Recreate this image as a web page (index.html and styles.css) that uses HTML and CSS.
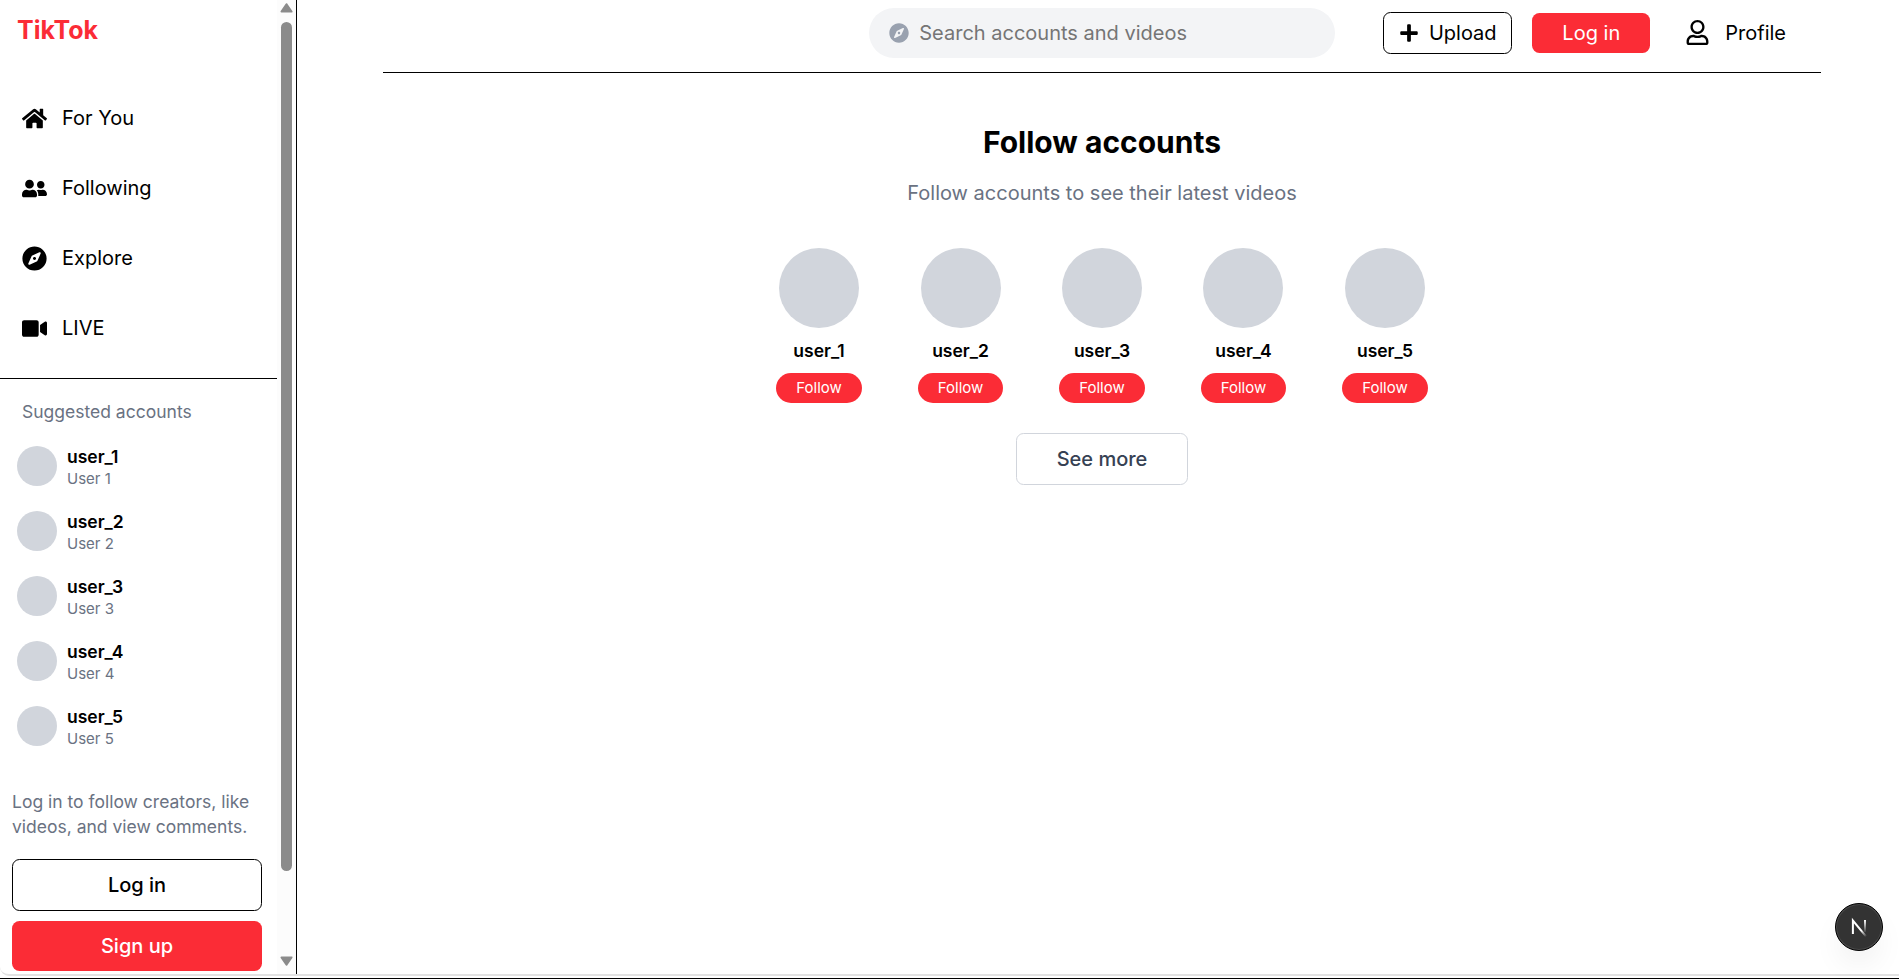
FILE: index.html
```html
<!DOCTYPE html>
<html lang="en">
<head>
<meta charset="utf-8">
<title>TikTok</title>
<link rel="stylesheet" href="styles.css">
</head>
<body>
<svg class="defs" width="0" height="0">
  <symbol id="compass" viewBox="0 0 496 512"><path d="M225.38 233.37c-12.5 12.5-12.5 32.76 0 45.25 12.49 12.5 32.76 12.5 45.25 0 12.5-12.5 12.5-32.76 0-45.25-12.5-12.49-32.76-12.49-45.25 0zM248 8C111.03 8 0 119.03 0 256s111.03 248 248 248 248-111.03 248-248S384.97 8 248 8zm126.14 148.05L308.17 300.4a31.938 31.938 0 0 1-15.77 15.77l-144.34 65.97c-16.65 7.61-33.81-9.55-26.2-26.2l65.98-144.35a31.938 31.938 0 0 1 15.77-15.77l144.34-65.97c16.65-7.6 33.8 9.55 26.19 26.2z"/></symbol>
</svg>
<div class="window">
  <aside class="sidebar">
    <div class="side-content">
      <h1 class="logo">TikTok</h1>
      <nav class="nav">
        <a class="nav-item"><svg class="icon" viewBox="0 0 576 512"><path d="M280.37 148.26L96 300.11V464a16 16 0 0 0 16 16l112.06-.29a16 16 0 0 0 15.92-16V368a16 16 0 0 1 16-16h64a16 16 0 0 1 16 16v95.64a16 16 0 0 0 16 16.05L464 480a16 16 0 0 0 16-16V300L295.67 148.26a12.19 12.19 0 0 0-15.3 0zM571.6 251.47L488 182.56V44.05a12 12 0 0 0-12-12h-56a12 12 0 0 0-12 12v72.61L318.47 43a48 48 0 0 0-61 0L4.34 251.47a12 12 0 0 0-1.6 16.9l25.5 31A12 12 0 0 0 45.15 301l235.22-193.74a12.19 12.19 0 0 1 15.3 0L530.9 301a12 12 0 0 0 16.9-1.6l25.5-31a12 12 0 0 0-1.7-16.93z"/></svg>For You</a>
        <a class="nav-item"><svg class="icon" viewBox="0 0 640 512"><path d="M192 256c61.9 0 112-50.1 112-112S253.9 32 192 32 80 82.1 80 144s50.1 112 112 112zm76.8 32h-8.3c-20.8 10-43.9 16-68.5 16s-47.6-6-68.5-16h-8.3C51.6 288 0 339.6 0 403.2V432c0 26.5 21.5 48 48 48h288c26.5 0 48-21.5 48-48v-28.8c0-63.6-51.6-115.2-115.2-115.2zM480 256c53 0 96-43 96-96s-43-96-96-96-96 43-96 96 43 96 96 96zm48 32h-3.8c-13.9 4.8-28.6 8-44.2 8s-30.3-3.2-44.2-8H432c-20.4 0-39.2 5.9-55.7 15.4 24.4 26.3 39.7 61.2 39.7 99.8v38.4c0 2.2-.5 4.3-.6 6.4H592c26.5 0 48-21.5 48-48 0-61.9-50.1-112-112-112z"/></svg>Following</a>
        <a class="nav-item"><svg class="icon"><use href="#compass"/></svg>Explore</a>
        <a class="nav-item"><svg class="icon" viewBox="0 0 576 512"><path d="M336.2 64H47.8C21.4 64 0 85.4 0 111.8v288.4C0 426.6 21.4 448 47.8 448h288.4c26.4 0 47.8-21.4 47.8-47.8V111.8c0-26.4-21.4-47.8-47.8-47.8zm189.4 37.7L416 177.3v157.4l109.6 75.5c21.2 14.6 50.4-.3 50.4-25.8V127.5c0-25.4-29.1-40.4-50.4-25.8z"/></svg>LIVE</a>
      </nav>
      <section class="suggested">
        <h2 class="suggested-title">Suggested accounts</h2>
        <ul class="accounts">
          <li class="account"><span class="avatar"></span><div><p class="name">user_1</p><p class="sub">User 1</p></div></li>
          <li class="account"><span class="avatar"></span><div><p class="name">user_2</p><p class="sub">User 2</p></div></li>
          <li class="account"><span class="avatar"></span><div><p class="name">user_3</p><p class="sub">User 3</p></div></li>
          <li class="account"><span class="avatar"></span><div><p class="name">user_4</p><p class="sub">User 4</p></div></li>
          <li class="account"><span class="avatar"></span><div><p class="name">user_5</p><p class="sub">User 5</p></div></li>
        </ul>
      </section>
      <section class="join">
        <p class="join-text">Log in to follow creators, like videos, and view comments.</p>
        <button class="btn btn-outline">Log in</button>
        <button class="btn btn-red">Sign up</button>
      </section>
    </div>
    <div class="scrollbar">
      <svg class="arrow" width="13" height="10" viewBox="0 0 13 10"><path d="M6.5 1.2 11.5 8.6H1.5Z"/></svg>
      <div class="thumb"></div>
      <svg class="arrow arrow-down" width="13" height="10" viewBox="0 0 13 10"><path d="M6.5 8.8 11.5 1.4H1.5Z"/></svg>
    </div>
  </aside>
  <main class="main">
    <header class="header">
      <label class="search"><svg class="search-icon"><use href="#compass"/></svg><input class="search-input" type="text" placeholder="Search accounts and videos"></label>
      <button class="upload"><svg class="plus" viewBox="0 0 448 512"><path d="M416 208H272V64c0-17.67-14.33-32-32-32h-32c-17.67 0-32 14.33-32 32v144H32c-17.67 0-32 14.33-32 32v32c0 17.67 14.33 32 32 32h144v144c0 17.67 14.33 32 32 32h32c17.67 0 32-14.33 32-32V304h144c17.67 0 32-14.33 32-32v-32c0-17.67-14.33-32-32-32z"/></svg>Upload</button>
      <button class="login">Log in</button>
      <a class="profile"><svg class="icon" viewBox="0 0 448 512"><path d="M313.6 304c-28.7 0-42.5 16-89.6 16-47.1 0-60.8-16-89.6-16C60.2 304 0 364.2 0 438.4V464c0 26.5 21.5 48 48 48h352c26.5 0 48-21.5 48-48v-25.6c0-74.2-60.2-134.4-134.4-134.4zM400 464H48v-25.6c0-47.6 38.8-86.4 86.4-86.4 14.6 0 38.3 16 89.6 16 51.7 0 74.9-16 89.6-16 47.6 0 86.4 38.8 86.4 86.4V464zM224 288c79.5 0 144-64.5 144-144S303.5 0 224 0 80 64.5 80 144s64.5 144 144 144zm0-240c52.9 0 96 43.1 96 96s-43.1 96-96 96-96-43.1-96-96 43.1-96 96-96z"/></svg>Profile</a>
    </header>
    <section class="follow">
      <h2 class="follow-title">Follow accounts</h2>
      <p class="follow-sub">Follow accounts to see their latest videos</p>
      <div class="people">
        <div class="person"><span class="photo"></span><p class="name">user_1</p><button class="follow-btn">Follow</button></div>
        <div class="person"><span class="photo"></span><p class="name">user_2</p><button class="follow-btn">Follow</button></div>
        <div class="person"><span class="photo"></span><p class="name">user_3</p><button class="follow-btn">Follow</button></div>
        <div class="person"><span class="photo"></span><p class="name">user_4</p><button class="follow-btn">Follow</button></div>
        <div class="person"><span class="photo"></span><p class="name">user_5</p><button class="follow-btn">Follow</button></div>
      </div>
      <button class="more">See more</button>
    </section>
  </main>
  <div class="badge">
    <svg width="50" height="50" viewBox="0 0 50 50" fill="none">
      <defs>
        <linearGradient id="diag" x1="28" y1="28" x2="33" y2="34" gradientUnits="userSpaceOnUse"><stop stop-color="#fff"/><stop offset="1" stop-color="#fff" stop-opacity="0"/></linearGradient>
        <linearGradient id="bar" x1="0" y1="18" x2="0" y2="31" gradientUnits="userSpaceOnUse"><stop stop-color="#fff"/><stop offset="1" stop-color="#fff" stop-opacity="0"/></linearGradient>
      </defs>
      <path d="M18.9 32V18.6L32.2 34.6" stroke="url(#diag)" stroke-width="2"/>
      <path d="M30 18H32V30H30Z" fill="url(#bar)"/>
    </svg>
  </div>
</div>
</body>
</html>
```
FILE: styles.css
```css
* { box-sizing: border-box; margin: 0; padding: 0; }
html, body { height: 979px; overflow: hidden; }
body {
  background: #fff;
  border-bottom: 1px solid #000;
  color: #000;
  font-family: Inter, "Liberation Sans", sans-serif;
  font-size: 20px;
  line-height: 30px;
}
button { font: inherit; border: 0; background: none; display: flex; align-items: center; justify-content: center; }
ul { list-style: none; }
.defs { position: absolute; }
.window {
  position: relative;
  display: flex;
  height: 976px;
  border-bottom: 2px solid #e2e2e2;
  border-bottom-left-radius: 9px;
}
.icon { width: 25px; height: 25px; flex: none; }

.sidebar { display: flex; width: 297px; flex: none; border-right: 1px solid #000; }
.side-content { width: 277px; }
.logo { padding: 13px 17px 0; font-size: 25px; line-height: 35px; font-weight: 700; color: #fb2c36; }
.nav { display: flex; flex-direction: column; gap: 20px; padding: 45px 22px 25px; border-bottom: 1px solid #000; }
.nav-item { display: flex; align-items: center; gap: 15px; height: 50px; }
.suggested { padding: 20px 17px 0; }
.suggested-title { padding-left: 5px; font-size: 17.5px; line-height: 25px; font-weight: 400; color: #6a7282; }
.accounts { display: flex; flex-direction: column; gap: 20px; padding-top: 20px; }
.account { display: flex; align-items: center; gap: 10px; height: 45px; }
.avatar { width: 40px; height: 40px; margin-bottom: 1px; border-radius: 50%; background: #d1d5dc; }
.name { font-size: 17.5px; line-height: 25px; font-weight: 600; }
.sub { font-size: 15px; line-height: 20px; color: #6a7282; }
.join { display: flex; flex-direction: column; gap: 10px; padding: 40px 15px 0 12px; }
.join-text { padding-bottom: 10px; font-size: 17.5px; line-height: 25px; color: #6a7282; }
.btn { width: 250px; border-radius: 7.5px; font-weight: 500; }
.btn-outline { height: 52px; border: 1px solid #000; }
.btn-red { height: 50px; background: #fb2c36; color: #fff; }
.scrollbar { display: flex; flex-direction: column; align-items: center; width: 19px; height: 974px; background: #fcfcfc; }
.arrow { margin-top: 3px; fill: #8b8b8b; stroke: #8b8b8b; stroke-width: 2; stroke-linejoin: round; }
.thumb { width: 11px; height: 849px; margin-top: 9px; border-radius: 6px; background: #8b8b8b; }
.arrow-down { margin: auto 0 8px; }

.main { flex: 1; }
.header { display: flex; align-items: center; justify-content: flex-end; width: 1438px; height: 73px; margin-left: 86px; padding: 0 35px 7px 0; border-bottom: 1px solid #000; }
.search { display: flex; align-items: center; gap: 10px; width: 466px; height: 50px; margin-right: 48px; padding: 0 20px; border-radius: 25px; background: #f3f4f6; }
.search-icon { width: 20px; height: 20px; fill: #99a1af; flex: none; }
.search-input { width: 380px; border: 0; outline: 0; background: transparent; font: inherit; color: #000; }
.search-input::placeholder { color: #757575; }
.upload { gap: 10px; width: 129px; height: 42px; border: 1px solid #000; border-radius: 7.5px; }
.plus { width: 20px; height: 20px; }
.login { width: 118px; height: 40px; margin-left: 20px; border-radius: 7.5px; background: #fb2c36; color: #fff; }
.profile { display: flex; align-items: center; gap: 15px; margin-left: 35px; }

.follow { display: flex; flex-direction: column; align-items: center; width: 1438px; margin-left: 86px; padding-top: 49px; }
.follow-title { font-size: 30px; line-height: 40px; font-weight: 700; }
.follow-sub { margin-top: 16px; color: #6a7282; }
.people { display: flex; gap: 55.9px; margin-top: 40px; }
.person { display: flex; flex-direction: column; align-items: center; width: 85.6px; }
.photo { width: 80px; height: 80px; margin-bottom: 10px; border-radius: 50%; background: #d1d5dc; }
.follow-btn { width: 85.6px; height: 30px; margin-top: 10px; border-radius: 15px; background: #fb2c36; color: #fff; font-size: 15px; line-height: 20px; }
.more { width: 172px; height: 52px; margin-top: 30px; border: 1px solid #d1d5dc; border-radius: 7.5px; color: #364153; font-weight: 500; }

.badge {
  position: absolute;
  right: 16px;
  bottom: 23px;
  width: 48px;
  height: 48px;
  display: flex;
  align-items: center;
  justify-content: center;
  border: 1px solid #000;
  border-radius: 50%;
  background: #333;
  box-shadow: inset 0 0 0 1px #4a4a4a, 0 16px 32px -8px rgba(0, 0, 0, .1);
}
.badge svg { flex: none; }
```
